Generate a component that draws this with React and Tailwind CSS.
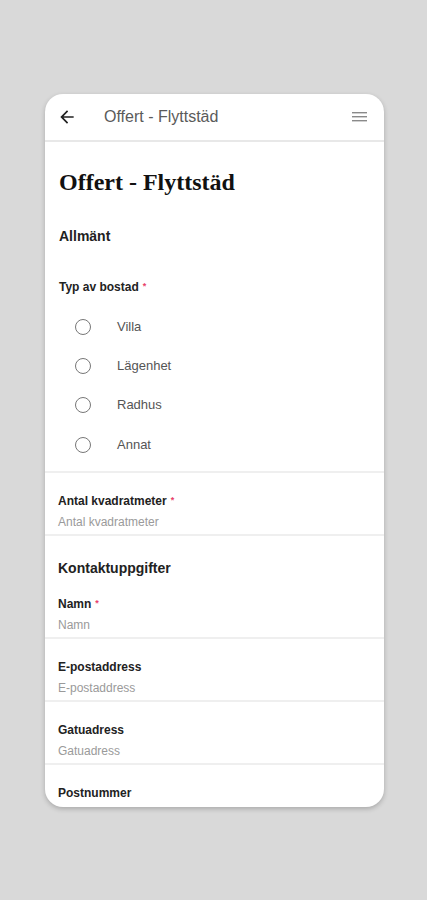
import React from 'react'

const SANS = { fontFamily: '"Liberation Sans", Arial, sans-serif' }

function Req() {
  return <span className="relative top-[-2px] ml-[4px] text-[9px] leading-none text-[#e8406a]">*</span>
}

function Divider() {
  return <div className="h-[2px] bg-[#efefef]" />
}

function Field({ label, required, placeholder }) {
  return (
    <div className="px-[13px] pt-[20px] pb-[4px]">
      <div className="text-[12px] leading-[16px] font-bold text-[#222]">
        {label}
        {required && <Req />}
      </div>
      <div className="mt-[5px] text-[12px] leading-[16px] text-[#9a9a9a]">{placeholder}</div>
    </div>
  )
}

const OPTIONS = ['Villa', 'Lägenhet', 'Radhus', 'Annat']

export default function App() {
  return (
    <div className="min-h-screen bg-[#d9d9d9] pt-[94px]" style={SANS}>
      <div className="ml-[45px] w-[339px] h-[713px] rounded-[18px] bg-white overflow-hidden shadow-[0_2px_5px_rgba(0,0,0,0.22)] flex flex-col">
        {/* header */}
        <div className="h-[48px] flex items-center border-b-2 border-[#e8e8e8] shrink-0">
          <svg width="20" height="20" viewBox="0 0 24 24" className="ml-[12px] text-[#222]" fill="currentColor">
            <path d="M20 11H7.83l5.59-5.59L12 4l-8 8 8 8 1.41-1.41L7.83 13H20v-2z" />
          </svg>
          <div className="ml-[27px] text-[16px] text-[#5a5a5a]">Offert - Flyttstäd</div>
          <svg width="16" height="12" viewBox="0 0 16 12" className="ml-auto mr-[16px]">
            <rect x="0" y="1" width="15" height="1.4" fill="#8a8a8a" />
            <rect x="0" y="5" width="15" height="1.4" fill="#8a8a8a" />
            <rect x="0" y="9" width="15" height="1.4" fill="#8a8a8a" />
          </svg>
        </div>

        {/* body */}
        <div className="flex-1 overflow-hidden">
          <div className="px-[14px]">
            <h1
              className="mt-[25px] text-[24px] leading-[30px] font-bold text-[#111]"
              style={{ fontFamily: '"Liberation Serif", "DejaVu Serif", serif' }}
            >
              Offert - Flyttstäd
            </h1>
            <div className="mt-[29px] text-[14px] leading-[20px] font-bold text-[#222]">Allmänt</div>
            <div className="mt-[33px] text-[12px] leading-[16px] font-bold text-[#222]">
              Typ av bostad
              <Req />
            </div>
            <div className="mt-[12px] mb-[7px]">
              {OPTIONS.map((o) => (
                <div key={o} className="h-[39.3px] flex items-center">
                  <div className="ml-[16px] w-[16px] h-[16px] rounded-full border-[1.5px] border-[#777]" />
                  <div className="ml-[26px] text-[13px] text-[#555]">{o}</div>
                </div>
              ))}
            </div>
          </div>
          <Divider />
          <Field label="Antal kvadratmeter" required placeholder="Antal kvadratmeter" />
          <Divider />
          <div className="px-[13px]">
            <div className="mt-[22px] text-[14px] leading-[20px] font-bold text-[#222]">Kontaktuppgifter</div>
            <div className="mt-[18px] text-[12px] leading-[16px] font-bold text-[#222]">
              Namn
              <Req />
            </div>
            <div className="mt-[5px] mb-[4px] text-[12px] leading-[16px] text-[#9a9a9a]">Namn</div>
          </div>
          <Divider />
          <Field label="E-postaddress" placeholder="E-postaddress" />
          <Divider />
          <Field label="Gatuadress" placeholder="Gatuadress" />
          <Divider />
          <Field label="Postnummer" placeholder="Postnummer" />
        </div>
      </div>
    </div>
  )
}
